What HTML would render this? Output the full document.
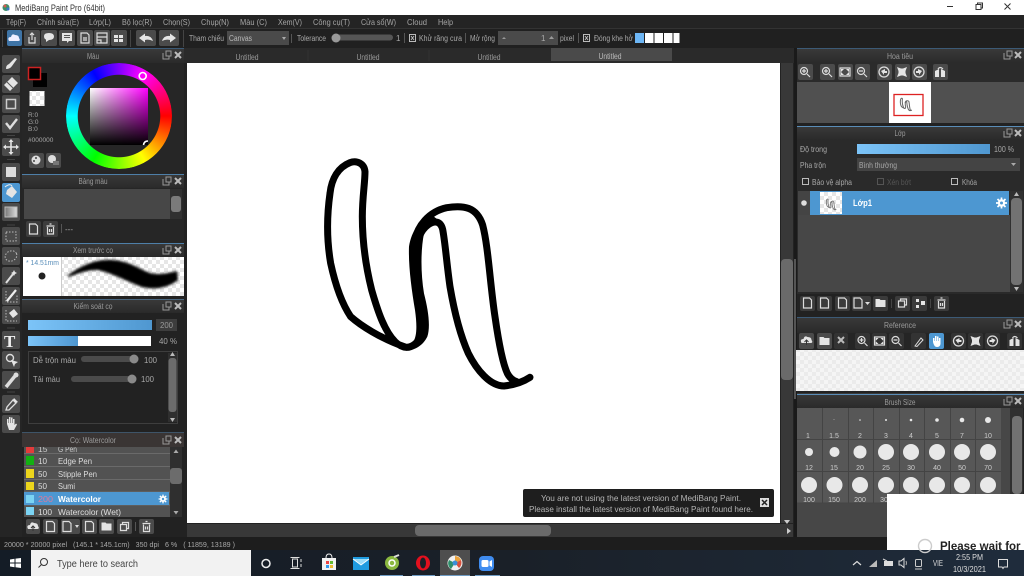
<!DOCTYPE html>
<html><head><meta charset="utf-8"><style>
html,body{margin:0;padding:0;background:#1e1e1e;width:1024px;height:576px;overflow:hidden}
#page{position:absolute;left:0;top:0;width:1024px;height:576px;overflow:hidden;filter:blur(.35px)}
svg{display:block;position:absolute;left:0;top:0}
text{font-family:"Liberation Sans","Noto Sans CJK SC",sans-serif;font-size:8px;fill:#a8a8a8;white-space:pre}
.h{fill:#9a9a9a;text-anchor:middle}
.m{font-size:8.5px;fill:#a5a5a5}
.b{fill:#4b4b4b}
.i{fill:none;stroke:#ddd;stroke-width:1.2}
.f{fill:#e4e4e4}
#wheel{position:absolute;left:66px;top:63px;width:106px;height:106px;border-radius:50%;background:conic-gradient(from 90deg,#f00,#ff0,#0f0,#0ff,#00f,#f0f,#f00);-webkit-mask:radial-gradient(circle,transparent 41px,#000 41.5px);mask:radial-gradient(circle,transparent 41px,#000 41.5px)}
#sq{position:absolute;left:90px;top:88px;width:58px;height:57px;background:linear-gradient(to bottom,transparent,#000),linear-gradient(to right,#fff,#f0f)}
</style></head><body><div id="page">
<svg width="1024" height="576" viewBox="0 0 1024 576" xmlns="http://www.w3.org/2000/svg">
<defs>
<pattern id="ck" width="8" height="8" patternUnits="userSpaceOnUse"><rect width="8" height="8" fill="#fff"/><rect width="4" height="4" fill="#e6e6e6"/><rect x="4" y="4" width="4" height="4" fill="#e6e6e6"/></pattern>
<filter id="bl" x="-10%" y="-30%" width="120%" height="160%"><feGaussianBlur stdDeviation="1.2"/></filter>
<linearGradient id="blue" x1="0" x2="1" y1="0" y2="0"><stop offset="0" stop-color="#7cc4f8"/><stop offset="1" stop-color="#4f97d0"/></linearGradient>
<linearGradient id="head" x1="0" x2="0" y1="0" y2="1"><stop offset="0" stop-color="#3a3a3a"/><stop offset="1" stop-color="#2a2a2a"/></linearGradient>
<g id="doc"><path class="i" d="M-4-5H2L4-3V5H-4Z"/></g>
<g id="pop"><path d="M-4-2V4H2V1M-1-4H4V1H-1Z" fill="none" stroke="#999"/></g>
<g id="x"><path d="M-3-3L3 3M3-3L-3 3" stroke="#bbb" stroke-width="2"/></g>
<g id="fold"><path class="f" d="M-5-4H-1L0-3H5V4H-5Z"/></g>
<g id="copy"><path class="i" d="M-4-2H2V4H-4ZM-2-2V-4H4V2H2"/></g>
<g id="trash"><path class="i" d="M-3-2V5H3V-2M-4-3H4M-1-5H1M-1 0V3M1 0V3"/></g>
<g id="zin"><circle cx="-1" cy="-1" r="3.5" class="i"/><path class="i" d="M2 2L5 5M-3-1H1M-1-3V1"/></g>
<g id="zout"><circle cx="-1" cy="-1" r="3.5" class="i"/><path class="i" d="M2 2L5 5M-3-1H1"/></g>
<g id="fit"><path class="i" d="M-5-4H5V4H-5Z"/><path class="f" d="M-4-3H-1L-4 0ZM4-3V0L1-3ZM-4 3V0L-1 3ZM4 3H1L4 0Z"/></g>
<g id="actual"><path class="f" d="M-5-5L-1-3.5H1L5-5L3.5-1V1L5 5L1 3.5H-1L-5 5L-3.500 1V-1Z"/></g>
<g id="rl"><circle r="5" fill="none" stroke="#ddd" stroke-width="1.3"/><path class="f" d="M-3-1L1-3V-1H3V1H0V3Z"/></g>
<g id="rr"><circle r="5" fill="none" stroke="#ddd" stroke-width="1.3"/><path class="f" d="M3-1L-1-3V-1H-3V1H0V3Z"/></g>
<g id="flip"><path class="f" d="M-5 5V-1L-1-3V5ZM1 5V-3L5-1V5H1Z"/><path class="i" d="M-2-3Q0-6 3-3"/></g>
<g id="gear"><circle r="3.7" fill="#fff"/><path d="M0-5.500V5.500M-5.500 0H5.500M-4-4L4 4M4-4L-4 4" stroke="#fff" stroke-width="1.700"/><circle r="1.500" fill="#4d97d1"/></g>
<g id="cloud"><path class="f" d="M-5 3Q-7-1-3-1Q-2-5 1-3Q5-3 5 0Q7 3 4 3Z"/><path d="M0 5V0M-2 2L0 0L2 2" stroke="#333" fill="none"/></g>
<g id="ink" fill="none" stroke-linecap="round" stroke-linejoin="round">
<path d="M690 712C672 724 650 734 612 738C570 738 530 690 505 640C478 580 462 510 450 440C440 370 436 310 428 268C422 244 405 240 385 254C360 272 352 300 348 340C344 400 355 460 368 510C376 560 372 590 345 612C325 628 305 624 285 605C255 575 235 520 215 450C195 370 187 300 187 230C187 170 195 130 195 95C193 70 170 60 150 68C115 82 95 115 90 160C80 230 80 300 92 370C105 430 125 490 152 530C180 555 240 595 318 622"/>
<path d="M345 300C352 260 385 215 440 203C490 195 530 200 548 255C565 320 570 430 585 530C595 600 608 670 622 700C630 715 640 722 650 725"/>
</g>
</defs>

<!-- base -->
<rect width="1024" height="576" fill="#222"/>
<rect width="1024" height="15" fill="#fff"/>
<circle cx="6" cy="7.500" r="3.500" fill="#3d8f6b"/><circle cx="5" cy="6" r="1.500" fill="#d85a50"/><circle cx="8" cy="9" r="1.500" fill="#3a77c9"/>
<text x="15" y="11" textLength="90" lengthAdjust="spacingAndGlyphs" style="font-size:9px;fill:#333">MediBang Paint Pro (64bit)</text>
<path d="M947 6.500H953" stroke="#333"/><path d="M976 4.500H981V9.500H976ZM977.500 4.500V3H982.500V8H981" fill="none" stroke="#333"/><path d="M1004.500 3.500L1010.500 9.500M1010.500 3.500L1004.500 9.500" stroke="#333"/>

<!-- menu -->
<rect y="15" width="1024" height="14" fill="#242424"/>
<g>
<text class="m" x="6" y="25" textLength="20" lengthAdjust="spacingAndGlyphs">Tệp(F)</text><text class="m" x="37" y="25" textLength="42" lengthAdjust="spacingAndGlyphs">Chỉnh sửa(E)</text><text class="m" x="89" y="25" textLength="22" lengthAdjust="spacingAndGlyphs">Lớp(L)</text><text class="m" x="122" y="25" textLength="30" lengthAdjust="spacingAndGlyphs">Bộ lọc(R)</text><text class="m" x="163" y="25" textLength="27" lengthAdjust="spacingAndGlyphs">Chọn(S)</text><text class="m" x="201" y="25" textLength="28" lengthAdjust="spacingAndGlyphs">Chụp(N)</text><text class="m" x="240" y="25" textLength="27" lengthAdjust="spacingAndGlyphs">Màu (C)</text><text class="m" x="278" y="25" textLength="24" lengthAdjust="spacingAndGlyphs">Xem(V)</text><text class="m" x="313" y="25" textLength="37" lengthAdjust="spacingAndGlyphs">Công cụ(T)</text><text class="m" x="361" y="25" textLength="35" lengthAdjust="spacingAndGlyphs">Cửa sổ(W)</text><text class="m" x="407" y="25" textLength="20" lengthAdjust="spacingAndGlyphs">Cloud</text><text class="m" x="438" y="25" textLength="15" lengthAdjust="spacingAndGlyphs">Help</text>
</g>

<!-- toolbar -->
<rect y="29" width="1024" height="19" fill="#202020"/><path d="M0 28.500H1024" stroke="#333"/>
<path d="M2.500 30V47M130.500 30V47M183.500 30V47" stroke="#444"/>
<rect x="7" y="30" width="15" height="16" rx="2" fill="#3f74a6"/><path d="M9 41Q7 37 11 37Q12 33 15 35Q19 35 19 38Q21 41 18 41Z" fill="#eef"/>
<g fill="#4b4b4b"><rect x="24" y="30" width="16" height="16" rx="2"/><rect x="41" y="30" width="16" height="16" rx="2"/><rect x="59" y="30" width="16" height="16" rx="2"/><rect x="77" y="30" width="16" height="16" rx="2"/><rect x="94" y="30" width="16" height="16" rx="2"/><rect x="111" y="30" width="16" height="16" rx="2"/><rect x="136" y="30" width="20" height="16" rx="2"/><rect x="159" y="30" width="20" height="16" rx="2"/></g>
<path class="i" d="M29 37V43H35V37M32 40V33M30 35L32 33L34 35"/>
<path class="f" d="M44 36Q44 33 49 33Q54 33 54 36.500Q54 40 49 40L46 42V39.500Q44 39 44 36Z"/>
<path class="f" d="M62 33H72V41H69L67 43V41H62Z"/><path d="M64 35.500H70M64 37.500H70" stroke="#555"/>
<path class="i" d="M81 33H87L89 35V43H81ZM83 38H87M83 40H87"/>
<path class="i" d="M97 33H107V43H97ZM97 37H107M97 40H101V43"/>
<path class="f" d="M114 35H118V38H114ZM119 35H123V38H119ZM114 39H118V42H114ZM119 39H123V42H119Z"/>
<path class="f" d="M139 38L145 33.500V36Q151 35 153 41Q149 39 145 40V42.500Z"/><path class="f" d="M176 38L170 33.500V36Q164 35 162 41Q166 39 170 40V42.500Z"/>
<text x="189" y="41" textLength="35" lengthAdjust="spacingAndGlyphs" style="fill:#aaa">Tham chiếu</text>
<rect x="227" y="31" width="62" height="14" fill="#4a4a4a"/><text x="229" y="41" textLength="23" lengthAdjust="spacingAndGlyphs" style="fill:#bbb">Canvas</text><path d="M282 37H286L284 40Z" fill="#aaa"/>
<path d="M291.500 34V43" stroke="#555"/>
<text x="297" y="41" textLength="29" lengthAdjust="spacingAndGlyphs" style="fill:#aaa">Tolerance</text>
<rect x="333" y="34.500" width="60" height="6" rx="3" fill="#555"/><circle cx="336" cy="38" r="4.500" fill="#999"/>
<text x="396" y="41">1</text><path d="M404.500 33V43M465.500 33V43M578.500 33V43" stroke="#555"/>
<rect x="409.500" y="34.500" width="6" height="7" fill="none" stroke="#bbb"/><path d="M411 36L414 40M414 36L411 40" stroke="#bbb"/>
<text x="419" y="41" textLength="43" lengthAdjust="spacingAndGlyphs">Khử răng cưa</text><text x="470" y="41" textLength="25" lengthAdjust="spacingAndGlyphs">Mở rộng</text>
<rect x="498" y="31" width="60" height="14" fill="#4a4a4a"/><path d="M502 39H506L504 37Z" fill="#999"/><text x="541" y="41" style="fill:#aaa">1</text><path d="M549 39H554L551.500 36Z" fill="#999"/>
<text x="560" y="41" textLength="14" lengthAdjust="spacingAndGlyphs">pixel</text>
<rect x="583.500" y="34.500" width="6" height="7" fill="none" stroke="#bbb"/><path d="M585 36L588 40M588 36L585 40" stroke="#bbb"/>
<text x="594" y="41" textLength="39" lengthAdjust="spacingAndGlyphs">Đóng khe hở</text>
<rect x="635" y="33" width="9" height="10" fill="#6db6f5"/><rect x="645" y="33" width="8.500" height="10" fill="#fff"/><rect x="654.500" y="33" width="8.500" height="10" fill="#fff"/><rect x="664" y="33" width="8.500" height="10" fill="#fff"/><rect x="673.500" y="33" width="6" height="10" fill="#fff"/>

<!-- tabs -->
<rect x="184" y="48" width="612" height="15" fill="#2a2a2a"/>
<rect x="551" y="48" width="121" height="13" fill="#4a4a4a"/>
<path d="M308 50V61M429 50V61" stroke="#333"/>
<text class="h" x="247" y="60" textLength="23" lengthAdjust="spacingAndGlyphs">Untitled</text><text class="h" x="368" y="60" textLength="23" lengthAdjust="spacingAndGlyphs">Untitled</text><text class="h" x="489" y="60" textLength="23" lengthAdjust="spacingAndGlyphs">Untitled</text><text class="h" x="610" y="59" textLength="23" lengthAdjust="spacingAndGlyphs" style="fill:#bbb">Untitled</text>

<!-- canvas -->
<rect x="187" y="63" width="593" height="460" fill="#fff"/>
<g transform="translate(300 140) scale(.3333)">
<use href="#ink" stroke="#000" stroke-width="21"/>
<path d="M327 320C325 380 335 450 345 510C352 560 350 590 340 605L318 632C345 632 370 615 382 590C392 560 385 510 372 460C362 400 362 330 372 280C380 262 395 250 415 240L395 225C360 240 335 270 327 320Z" fill="#000"/>
</g>

<!-- scrollbars -->
<rect x="781" y="63" width="12" height="460" fill="#383838"/><rect x="781" y="259" width="12" height="121" rx="4" fill="#6a6a6a"/>
<path d="M784 520H790L787 524Z" fill="#ccc"/>
<rect x="187" y="524" width="606" height="13" fill="#383838"/><rect x="415" y="525" width="136" height="11" rx="4" fill="#6a6a6a"/>
<path d="M787 528V534L791 531Z" fill="#ccc"/>
<rect x="794" y="48" width="3" height="489" fill="#1a1a1a"/><rect x="794" y="259" width="2" height="140" fill="#555"/>

<!-- notice -->
<rect x="523" y="489" width="251" height="28" rx="2" fill="#1e1e1e"/>
<text class="h" x="641" y="501" textLength="200" lengthAdjust="spacingAndGlyphs" style="font-size:8.300px;fill:#b5b5b5">You are not using the latest version of MediBang Paint.</text>
<text class="h" x="641" y="512" textLength="224" lengthAdjust="spacingAndGlyphs" style="font-size:8.300px;fill:#b5b5b5">Please install the latest version of MediBang Paint found here.</text>
<rect x="760" y="498" width="9" height="9" fill="#ddd"/><path d="M762 500L767 505M767 500L762 505" stroke="#222" stroke-width="1.500"/>

<!-- left tools -->
<rect width="22" height="489" y="48" fill="#252525"/>
<g fill="#4b4b4b">
<rect x="2" y="55" width="18" height="18" rx="2"/><rect x="2" y="75" width="18" height="18" rx="2"/><rect x="2" y="95" width="18" height="18" rx="2"/><rect x="2" y="115" width="18" height="18" rx="2"/><rect x="2" y="138" width="18" height="18" rx="2"/><rect x="2" y="163" width="18" height="18" rx="2"/><rect x="2" y="203" width="18" height="18" rx="2"/><rect x="2" y="227" width="18" height="18" rx="2"/><rect x="2" y="247" width="18" height="18" rx="2"/><rect x="2" y="267" width="18" height="18" rx="2"/><rect x="2" y="287" width="18" height="18" rx="2"/><rect x="2" y="306" width="18" height="18" rx="2"/><rect x="2" y="331" width="18" height="18" rx="2"/><rect x="2" y="351" width="18" height="18" rx="2"/><rect x="2" y="371" width="18" height="18" rx="2"/><rect x="2" y="395" width="18" height="18" rx="2"/><rect x="2" y="415" width="18" height="18" rx="2"/>
</g>
<rect x="2" y="183" width="18" height="19" rx="2" fill="#4d97d1"/>
<path class="f" d="M6 69Q6 65 9 64L15 58L17 59L12 66Q10 69 6 69Z"/>
<path class="f" d="M12 77L18 83L10 91L4 85Z"/><path d="M7 82L13 88" stroke="#555"/>
<rect x="6.500" y="99.500" width="9" height="9" fill="none" stroke="#ccc" stroke-width="1.500"/>
<path d="M6 123L10 128L17 119" fill="none" stroke="#ddd" stroke-width="2.400"/>
<path d="M11 140V154M4 147H18" stroke="#e4e4e4" stroke-width="1.600"/><path class="f" d="M11 139L13.500 142H8.500ZM11 155L13.500 152H8.500ZM3 147L6 144.500V149.500ZM19 147L16 144.500V149.500Z"/>
<rect x="6" y="167" width="10" height="10" fill="#ddd"/>
<path class="f" d="M7 190L12 186L17 192L12 198L6 194Z"/><path d="M5 187Q10 183 12 186" stroke="#eee" fill="none"/>
<defs><linearGradient id="gr" x1="0" x2="1"><stop offset="0" stop-color="#777"/><stop offset="1" stop-color="#ddd"/></linearGradient></defs>
<rect x="5" y="207" width="12" height="10" fill="url(#gr)" stroke="#bbb"/>
<rect x="6" y="232" width="10" height="9" fill="none" stroke="#bbb" stroke-dasharray="1.500 1.500"/>
<ellipse cx="11" cy="256" rx="6" ry="5" fill="none" stroke="#bbb" stroke-dasharray="1.500 1.500" transform="rotate(-25 11 256)"/>
<path d="M6 283L13 274" stroke="#ddd" stroke-width="2"/><path class="f" d="M14 270L15 272L17 273L15 274L14 276L13 274L11 273L13 272Z"/>
<path d="M6 291V302H17V295" fill="none" stroke="#bbb" stroke-dasharray="1.500 1.500"/><path d="M7 301L16 290" stroke="#eee" stroke-width="2.200"/>
<path d="M6 310V321H17" fill="none" stroke="#bbb" stroke-dasharray="1.500 1.500"/><path class="f" d="M9 313L14 309L18 314L13 318Z"/>
<text x="4" y="347" style="font-family:'Liberation Serif',serif;font-size:17px;font-weight:bold;fill:#eee">T</text>
<circle cx="10" cy="358" r="3.500" fill="none" stroke="#ddd" stroke-width="1.400"/><path class="f" d="M11 360L18 362L15 364L14 367Z"/>
<path d="M6 387L15 376" stroke="#ddd" stroke-width="3.500"/><circle cx="16" cy="375" r="2.500" fill="#ddd"/>
<path d="M6 410L7 407L13 400L16 403L9 410Z" fill="none" stroke="#ddd" stroke-width="1.300"/><path class="f" d="M14 398L18 402L16 403L13 400Z"/>
<path class="f" d="M7 424V419H8.500V423H9V417H10.500V423H11V417.500H12.500V423H13V419H14.500V425L16 423.500L17 424.500L14 430H9Z"/>
<path d="M7 135.500H15M7 159.500H15M7 225H15M7 328H15M7 392H15" stroke="#444"/>

<!-- Màu panel -->
<rect x="22" y="48" width="162" height="126" fill="#262626"/>
<rect x="22" y="48" width="162" height="15" fill="url(#head)"/><path d="M22 48.500H184" stroke="#3c5a76"/>
<text class="h" x="93" y="59" textLength="12" lengthAdjust="spacingAndGlyphs">Màu</text>
<use href="#pop" x="167" y="55"/><use href="#x" x="178" y="55"/>
<rect x="33" y="73" width="14" height="14" fill="#000"/><rect x="28.500" y="67.500" width="12" height="12" fill="#000" stroke="#c22" stroke-width="1.500"/>
<rect x="29.500" y="91" width="15" height="15" fill="url(#ck)"/>
<text x="28" y="117" style="font-size:6.500px">R:0</text><text x="28" y="124" style="font-size:6.500px">G:0</text><text x="28" y="131" style="font-size:6.500px">B:0</text><text x="28" y="142" style="font-size:6.500px">#000000</text>
<rect x="29" y="153" width="15" height="15" rx="2" fill="#4b4b4b"/><rect x="46" y="153" width="15" height="15" rx="2" fill="#4b4b4b"/>
<circle cx="36" cy="160" r="4.500" fill="#ddd"/><circle cx="36" cy="158" r="1" fill="#444"/><circle cx="34" cy="161" r="1" fill="#444"/>
<circle cx="52" cy="159" r="4" fill="#ddd"/><rect x="53" y="161" width="6" height="4" fill="#777"/>

<!-- Bảng màu -->
<rect x="22" y="173" width="162" height="70" fill="#262626"/>
<rect x="22" y="174" width="162" height="14" fill="url(#head)"/><path d="M22 174.500H184" stroke="#4e7fa8"/>
<text class="h" x="93" y="184" textLength="29" lengthAdjust="spacingAndGlyphs">Bảng màu</text><use href="#pop" x="167" y="181"/><use href="#x" x="178" y="181"/>
<rect x="24" y="189" width="146" height="30" fill="#474747"/>
<rect x="170" y="189" width="12" height="30" fill="#303030"/><rect x="171" y="196" width="10" height="16" rx="3" fill="#7a7a7a"/>
<rect x="26" y="221" width="15" height="16" rx="2" fill="#3d3d3d"/><rect x="43" y="221" width="15" height="16" rx="2" fill="#3d3d3d"/>
<use href="#doc" x="33.500" y="229"/><use href="#trash" x="50.500" y="229"/>
<path d="M61.500 224V233" stroke="#555"/><text x="65" y="232">---</text>

<!-- Xem trước cọ -->
<rect x="22" y="243" width="162" height="14" fill="url(#head)"/><path d="M22 243.500H184" stroke="#4e7fa8"/>
<text class="h" x="93" y="253" textLength="40" lengthAdjust="spacingAndGlyphs">Xem trước cọ</text><use href="#pop" x="167" y="250"/><use href="#x" x="178" y="250"/>
<rect x="23" y="257" width="161" height="39" fill="url(#ck)"/><rect x="23" y="257" width="38" height="39" fill="#fff"/><path d="M61.500 257V296" stroke="#ccc"/>
<text x="26" y="265" textLength="33" lengthAdjust="spacingAndGlyphs" style="font-size:7px;fill:#5b8fba">* 14.51mm</text>
<circle cx="42" cy="276" r="3.500" fill="#222"/>
<path d="M68 275C78 268 90 261 105 260C118 259 128 262 145 271C155 276 165 274 177 271L178 280C168 288 155 290 142 287C128 282 112 273 98 270C85 270 78 274 68 277Z" fill="#000" filter="url(#bl)"/>

<!-- Kiểm soát cọ -->
<rect x="22" y="299" width="162" height="14" fill="url(#head)"/><path d="M22 299.500H184" stroke="#4a6780"/>
<text class="h" x="93" y="309" textLength="39" lengthAdjust="spacingAndGlyphs">Kiểm soát cọ</text><use href="#pop" x="167" y="306"/><use href="#x" x="178" y="306"/>
<rect x="28" y="320" width="124" height="10" fill="url(#blue)"/>
<rect x="156" y="319" width="21" height="12" fill="#3d3d3d"/><text class="h" x="166.500" y="328" textLength="13" lengthAdjust="spacingAndGlyphs" style="font-size:8.500px">200</text>
<rect x="28" y="336" width="123" height="10" fill="#fff"/><rect x="28" y="336" width="50" height="10" fill="url(#blue)"/>
<text x="159" y="344" textLength="18" lengthAdjust="spacingAndGlyphs" style="font-size:8.500px">40 %</text>
<rect x="28.500" y="351.500" width="149" height="72" fill="none" stroke="#3e3e3e"/>
<text x="33" y="363" textLength="43" lengthAdjust="spacingAndGlyphs" style="font-size:8.500px">Dễ trộn màu</text>
<rect x="81" y="356" width="55" height="6" rx="3" fill="#4b4b4b"/><circle cx="134" cy="359" r="4.500" fill="#8a8a8a"/>
<text x="144" y="363" textLength="13" lengthAdjust="spacingAndGlyphs" style="font-size:8.500px">100</text>
<text x="33" y="382" textLength="27" lengthAdjust="spacingAndGlyphs" style="font-size:8.500px">Tải màu</text>
<rect x="71" y="376" width="60" height="6" rx="3" fill="#4b4b4b"/><circle cx="132" cy="379" r="4.500" fill="#8a8a8a"/>
<text x="141" y="382" textLength="13" lengthAdjust="spacingAndGlyphs" style="font-size:8.500px">100</text>
<rect x="168" y="353" width="9" height="69" fill="#2f2f2f"/><rect x="168.500" y="358" width="8" height="54" rx="3" fill="#6c6c6c"/>
<path d="M170 418H175L172.500 422Z" fill="#bbb"/><path d="M170 356H175L172.500 352Z" fill="#bbb"/>

<!-- Cọ panel -->
<rect x="24" y="447" width="146" height="70" fill="#525252"/>
<path d="M24 453.500H170M24 466.500H170M24 479.500H170M24 492H170M24 505H170" stroke="#6a6a6a"/>
<rect x="26" y="447" width="8" height="6" fill="#e43b3b"/><text x="38" y="452" style="font-size:8.500px;fill:#ccc">15</text><text x="58" y="452" textLength="19" lengthAdjust="spacingAndGlyphs" style="font-size:8.500px;fill:#ccc">G Pen</text>
<rect x="26" y="456" width="8" height="9" fill="#12b012"/><text x="38" y="464" textLength="9" lengthAdjust="spacingAndGlyphs" style="font-size:8.500px;fill:#ddd">10</text><text x="58" y="464" textLength="34" lengthAdjust="spacingAndGlyphs" style="font-size:8.500px;fill:#ddd">Edge Pen</text>
<rect x="26" y="469" width="8" height="9" fill="#ecd51c"/><text x="38" y="477" textLength="9" lengthAdjust="spacingAndGlyphs" style="font-size:8.500px;fill:#ddd">50</text><text x="58" y="477" textLength="39" lengthAdjust="spacingAndGlyphs" style="font-size:8.500px;fill:#ddd">Stipple Pen</text>
<rect x="26" y="482" width="8" height="8" fill="#ecd51c"/><text x="38" y="489" textLength="9" lengthAdjust="spacingAndGlyphs" style="font-size:8.500px;fill:#ddd">50</text><text x="58" y="489" textLength="17" lengthAdjust="spacingAndGlyphs" style="font-size:8.500px;fill:#ddd">Sumi</text>
<rect x="24" y="492" width="145" height="13" fill="#4d97d1"/>
<rect x="26" y="495" width="8" height="8" fill="#7bd4f4"/><text x="38" y="502" textLength="15" lengthAdjust="spacingAndGlyphs" style="font-size:8.500px;fill:#e07a9a">200</text><text x="58" y="502" textLength="43" lengthAdjust="spacingAndGlyphs" style="font-size:8.500px;font-weight:bold;fill:#fff">Watercolor</text><use href="#gear" transform="translate(163 499) scale(.8)"/>
<rect x="26" y="507" width="8" height="8" fill="#7bd4f4"/><text x="38" y="515" textLength="14" lengthAdjust="spacingAndGlyphs" style="font-size:8.500px;fill:#ddd">100</text><text x="58" y="515" textLength="63" lengthAdjust="spacingAndGlyphs" style="font-size:8.500px;fill:#ddd">Watercolor (Wet)</text>
<rect x="22" y="432" width="162" height="15" fill="#3a3534"/><path d="M22 432.500H184" stroke="#3e5468"/>
<text class="h" x="93" y="443" textLength="46" lengthAdjust="spacingAndGlyphs">Cọ: Watercolor</text><use href="#pop" x="167" y="440"/><use href="#x" x="178" y="440"/>
<rect x="170" y="447" width="12" height="70" fill="#2f2f2f"/><rect x="170" y="468" width="12" height="16" rx="3" fill="#6c6c6c"/>
<path d="M173.500 453H178.500L176 449.500ZM173.500 511H178.500L176 514.500Z" fill="#aaa"/>
<g fill="#4b4b4b"><rect x="26" y="519" width="14" height="15" rx="2"/><rect x="43" y="519" width="15" height="15" rx="2"/><rect x="61" y="519" width="19" height="15" rx="2"/><rect x="82" y="519" width="15" height="15" rx="2"/><rect x="99" y="519" width="15" height="15" rx="2"/><rect x="117" y="519" width="15" height="15" rx="2"/><rect x="139" y="519" width="15" height="15" rx="2"/></g>
<use href="#cloud" x="33" y="526"/><use href="#doc" x="50.500" y="526.500"/><use href="#doc" x="67" y="526.500"/><path d="M75 525H79L77 528Z" fill="#ddd"/><use href="#doc" x="89.500" y="526.500"/><use href="#fold" x="106.500" y="526.500"/><use href="#copy" x="124.500" y="526.500"/><path d="M135.500 522V531" stroke="#555"/><use href="#trash" x="146.500" y="526.500"/>

<!-- Right: Hoa tiêu -->
<rect x="797" y="48" width="227" height="15" fill="url(#head)"/><path d="M797 48.500H1024" stroke="#3c5a76"/>
<text class="h" x="900" y="59" textLength="26" lengthAdjust="spacingAndGlyphs">Hoa tiêu</text><use href="#pop" x="1008" y="55"/><use href="#x" x="1018" y="55"/>
<rect x="797" y="63" width="227" height="19" fill="#2b2b2b"/>
<g fill="#4b4b4b"><rect x="798" y="64" width="15" height="16" rx="2"/><rect x="820" y="64" width="15" height="16" rx="2"/><rect x="838" y="64" width="15" height="16" rx="2"/><rect x="855" y="64" width="15" height="16" rx="2"/><rect x="877" y="64" width="15" height="16" rx="2"/><rect x="895" y="64" width="15" height="16" rx="2"/><rect x="912" y="64" width="15" height="16" rx="2"/><rect x="933" y="64" width="15" height="16" rx="2"/></g>
<use href="#zin" x="805" y="72"/><use href="#zin" x="827" y="72"/><use href="#fit" x="845" y="72"/><use href="#zout" x="862" y="72"/><use href="#rl" x="884" y="72"/><use href="#actual" x="902" y="72"/><use href="#rr" x="919" y="72"/><use href="#flip" x="940" y="72"/>
<rect x="797" y="82" width="227" height="41" fill="#505050"/>
<rect x="889" y="82" width="42" height="41" fill="#fff"/>
<rect x="894" y="94.500" width="29" height="21" fill="none" stroke="#d22" stroke-width="1.300"/>
<g transform="translate(898.800 97) scale(.0185)"><use href="#ink" stroke="#666" stroke-width="55"/></g>

<!-- Lớp -->
<rect x="797" y="124" width="227" height="2" fill="#222"/>
<rect x="797" y="126" width="227" height="168" fill="#2a2a2a"/>
<rect x="797" y="126" width="227" height="14" fill="url(#head)"/><path d="M797 126.500H1024" stroke="#5a8db8"/>
<text class="h" x="900" y="136" textLength="11" lengthAdjust="spacingAndGlyphs">Lớp</text><use href="#pop" x="1008" y="133"/><use href="#x" x="1018" y="133"/>
<text x="800" y="152" textLength="27" lengthAdjust="spacingAndGlyphs" style="font-size:8.500px">Độ trong</text>
<rect x="857" y="144" width="133" height="10" fill="url(#blue)"/><text x="994" y="152" textLength="20" lengthAdjust="spacingAndGlyphs" style="font-size:8.500px">100 %</text>
<text x="800" y="168" textLength="26" lengthAdjust="spacingAndGlyphs" style="font-size:8.500px">Pha trộn</text>
<rect x="857" y="158" width="163" height="13" fill="#444"/><text x="859" y="168" textLength="38" lengthAdjust="spacingAndGlyphs" style="font-size:8.500px">Bình thường</text><path d="M1011 163H1016L1013.500 166Z" fill="#aaa"/>
<rect x="802.500" y="178.500" width="6" height="6" fill="none" stroke="#bbb"/><text x="812" y="185" textLength="40" lengthAdjust="spacingAndGlyphs" style="font-size:8.500px">Bảo vệ alpha</text>
<rect x="877.500" y="178.500" width="6" height="6" fill="none" stroke="#555"/><text x="887" y="185" textLength="24" lengthAdjust="spacingAndGlyphs" style="font-size:8.500px;fill:#555">Xén bớt</text>
<rect x="951.500" y="178.500" width="6" height="6" fill="none" stroke="#bbb"/><text x="962" y="185" textLength="15" lengthAdjust="spacingAndGlyphs" style="font-size:8.500px">Khóa</text>
<rect x="798" y="191" width="12" height="24" fill="#444"/><circle cx="804" cy="203" r="2.800" fill="#ddd"/>
<rect x="810" y="191" width="199" height="24" fill="#4d97d1"/>
<rect x="820" y="192" width="22" height="22" fill="url(#ck)"/>
<g transform="translate(825 198) scale(.016)"><use href="#ink" stroke="#777" stroke-width="55"/></g>
<text x="853" y="206" textLength="19" lengthAdjust="spacingAndGlyphs" style="font-size:9px;font-weight:bold;fill:#fff">Lớp1</text>
<use href="#gear" x="1001.500" y="203"/>
<rect x="798" y="215" width="212" height="77" fill="#474747"/>
<rect x="1010" y="191" width="13" height="101" fill="#303030"/><rect x="1011" y="198" width="11" height="87" rx="4" fill="#727272"/>
<path d="M1014 196H1019L1016.500 192ZM1014 287H1019L1016.500 291Z" fill="#bbb"/>
<g fill="#3b3b3b"><rect x="800" y="296" width="15" height="15" rx="2"/><rect x="817" y="296" width="15" height="15" rx="2"/><rect x="835" y="296" width="15" height="15" rx="2"/><rect x="852" y="296" width="19" height="15" rx="2"/><rect x="873" y="296" width="15" height="15" rx="2"/><rect x="895" y="296" width="15" height="15" rx="2"/><rect x="912" y="296" width="15" height="15" rx="2"/><rect x="934" y="296" width="15" height="15" rx="2"/></g>
<use href="#doc" x="807.500" y="303"/><use href="#doc" x="824.500" y="303"/><use href="#doc" x="842.500" y="303"/><use href="#doc" x="858" y="303"/><path d="M865 302H870L867.500 305Z" fill="#ddd"/><use href="#fold" x="880.500" y="303"/><use href="#copy" x="902.500" y="303"/>
<path class="f" d="M916 299H919V302H916ZM921 301H925V305H921ZM916 305H919V308H916Z"/><use href="#trash" x="941.500" y="303"/>
<path d="M891.500 299V308M930.500 299V308" stroke="#444"/>

<!-- Reference -->
<rect x="797" y="317" width="227" height="16" fill="url(#head)"/><path d="M797 317.500H1024" stroke="#3c5a76"/>
<text class="h" x="900" y="328" textLength="32" lengthAdjust="spacingAndGlyphs">Reference</text><use href="#pop" x="1008" y="324"/><use href="#x" x="1018" y="324"/>
<rect x="797" y="333" width="227" height="17" fill="#252525"/>
<g fill="#4b4b4b"><rect x="799" y="333" width="15" height="16" rx="2"/><rect x="817" y="333" width="15" height="16" rx="2"/></g>
<g fill="#333"><rect x="834" y="333" width="14" height="16" rx="2"/><rect x="855" y="333" width="15" height="16" rx="2"/><rect x="872" y="333" width="15" height="16" rx="2"/><rect x="889" y="333" width="15" height="16" rx="2"/><rect x="911" y="333" width="15" height="16" rx="2"/><rect x="951" y="333" width="15" height="16" rx="2"/><rect x="968" y="333" width="15" height="16" rx="2"/><rect x="985" y="333" width="15" height="16" rx="2"/><rect x="1007" y="333" width="15" height="16" rx="2"/></g>
<rect x="929" y="333" width="15" height="16" rx="2" fill="#4d97d1"/>
<use href="#cloud" x="806.500" y="340"/><use href="#fold" x="824.500" y="341"/><use href="#x" x="841" y="340"/><use href="#zin" x="862.500" y="341"/><use href="#fit" x="879.500" y="341"/><use href="#zout" x="896.500" y="341"/>
<path d="M915 346L921 338L923 340L917 346.500Z" fill="none" stroke="#ddd"/>
<path d="M933 342V338H934.500V341H935V336H936.500V341H937V336.500H938.500V341H939V338H940.500V344Q940 347 937 347Q934 347 933 342Z" fill="#fff"/>
<use href="#rl" x="958.500" y="341"/><use href="#actual" x="975.500" y="341"/><use href="#rr" x="992.500" y="341"/><use href="#flip" x="1014.500" y="341"/>
<rect x="796" y="350" width="228" height="41" fill="url(#ck)"/>
<rect x="796" y="350" width="228" height="41" fill="#eee" opacity=".6"/>

<!-- Brush size -->
<rect x="797" y="393" width="227" height="15" fill="url(#head)"/><path d="M797 394.500H1024" stroke="#5a8db8"/>
<text class="h" x="900" y="405" textLength="31" lengthAdjust="spacingAndGlyphs">Brush Size</text><use href="#pop" x="1008" y="401"/><use href="#x" x="1018" y="401"/>
<rect x="797" y="408" width="213" height="129" fill="#474747"/>
<rect x="797" y="408" width="204" height="95" fill="#575757"/>
<path d="M822.500 408V503M848.500 408V503M873.500 408V503M899.500 408V503M924.500 408V503M950.500 408V503M975.500 408V503M797 439.500H1001M797 471.500H1001M797 503H1001" stroke="#444"/>
<rect x="1010" y="408" width="13" height="129" fill="#303030"/><rect x="1012" y="416" width="10" height="78" rx="4" fill="#727272"/>
<g fill="#e8e8e8">
<circle cx="834" cy="419.500" r=".4"/><circle cx="860" cy="420" r=".8"/><circle cx="886" cy="420" r="1"/><circle cx="911" cy="420" r="1.300"/><circle cx="937" cy="420" r="1.800"/><circle cx="962" cy="420" r="2.300"/><circle cx="988" cy="420" r="3"/>
<circle cx="809" cy="452" r="4"/><circle cx="834.500" cy="452" r="5"/><circle cx="860" cy="452" r="6.500"/><circle cx="886" cy="452" r="8"/><circle cx="911" cy="452" r="8"/><circle cx="937" cy="452" r="8"/><circle cx="962" cy="452" r="8"/><circle cx="988" cy="452" r="8"/>
<circle cx="809" cy="485" r="8"/><circle cx="834.500" cy="485" r="8"/><circle cx="860" cy="485" r="8"/><circle cx="886" cy="485" r="8"/><circle cx="911" cy="485" r="8"/><circle cx="937" cy="485" r="8"/><circle cx="962" cy="485" r="8"/><circle cx="988" cy="485" r="8"/>
</g>
<g>
<text x="808" y="438" style="font-size:7px;fill:#ccc;text-anchor:middle">1</text><text x="834" y="438" style="font-size:7px;fill:#ccc;text-anchor:middle">1.5</text><text x="860" y="438" style="font-size:7px;fill:#ccc;text-anchor:middle">2</text><text x="886" y="438" style="font-size:7px;fill:#ccc;text-anchor:middle">3</text><text x="911" y="438" style="font-size:7px;fill:#ccc;text-anchor:middle">4</text><text x="937" y="438" style="font-size:7px;fill:#ccc;text-anchor:middle">5</text><text x="962" y="438" style="font-size:7px;fill:#ccc;text-anchor:middle">7</text><text x="988" y="438" style="font-size:7px;fill:#ccc;text-anchor:middle">10</text>
<text x="809" y="470" style="font-size:7px;fill:#ccc;text-anchor:middle">12</text><text x="834" y="470" style="font-size:7px;fill:#ccc;text-anchor:middle">15</text><text x="860" y="470" style="font-size:7px;fill:#ccc;text-anchor:middle">20</text><text x="886" y="470" style="font-size:7px;fill:#ccc;text-anchor:middle">25</text><text x="911" y="470" style="font-size:7px;fill:#ccc;text-anchor:middle">30</text><text x="937" y="470" style="font-size:7px;fill:#ccc;text-anchor:middle">40</text><text x="962" y="470" style="font-size:7px;fill:#ccc;text-anchor:middle">50</text><text x="988" y="470" style="font-size:7px;fill:#ccc;text-anchor:middle">70</text>
<text x="809" y="502" style="font-size:7px;fill:#ccc;text-anchor:middle">100</text><text x="834" y="502" style="font-size:7px;fill:#ccc;text-anchor:middle">150</text><text x="860" y="502" style="font-size:7px;fill:#ccc;text-anchor:middle">200</text><text x="886" y="502" style="font-size:7px;fill:#ccc;text-anchor:middle">300</text>
</g>

<!-- status -->
<rect y="537" width="1024" height="13" fill="#1d1d1d"/>
<text x="4" y="547" textLength="231" lengthAdjust="spacingAndGlyphs" style="font-size:7.700px;fill:#a8a8a8">20000 * 20000 pixel   (145.1 * 145.1cm)   350 dpi   6 %   ( 11859, 13189 )</text>

<!-- taskbar -->
<defs><linearGradient id="tb" x1="0" x2="1"><stop offset="0" stop-color="#141c26"/><stop offset=".5" stop-color="#1a2028"/><stop offset="1" stop-color="#1f2c3c"/></linearGradient></defs>
<rect y="550" width="1024" height="26" fill="url(#tb)"/>
<path d="M10 559.500L14.500 558.800V562.500H10ZM15.500 558.600L21 558V562.500H15.500ZM10 563.500H14.500V567.200L10 566.500ZM15.500 563.500H21V568L15.500 567.300Z" style="fill:#fff"/>
<rect x="31" y="550" width="220" height="26" fill="#f2f2f2"/>
<circle cx="44" cy="562" r="3.500" fill="none" stroke="#333"/><path d="M41.500 564.500L38.500 567.500" stroke="#333"/>
<text x="57" y="567" textLength="81" lengthAdjust="spacingAndGlyphs" style="font-size:10px;fill:#444">Type here to search</text>
<circle cx="266" cy="563.500" r="4" fill="none" stroke="#eee" stroke-width="1.500"/>
<path d="M292.500 559H297.500V567H292.500ZM290.500 557.500H299.500M290.500 568.500H299.500M301 559V562M301 564V567" fill="none" stroke="#ddd"/>
<path d="M322 558H336V570H322Z" fill="#f2f2f2"/><path d="M326 558Q326 554 329 554Q332 554 332 558" fill="none" stroke="#eee"/>
<rect x="326" y="561" width="3" height="3" fill="#e44"/><rect x="330" y="561" width="3" height="3" fill="#6b3"/><rect x="326" y="565" width="3" height="3" fill="#39e"/><rect x="330" y="565" width="3" height="3" fill="#eb3"/>
<rect x="353" y="557" width="16" height="13" fill="#1f9be0"/><path d="M353 559L361 565L369 559" fill="#9cdcf8" stroke="#fff" stroke-width=".8"/>
<circle cx="392" cy="563" r="7" fill="#8ab840"/><circle cx="392" cy="563" r="3" fill="none" stroke="#fff" stroke-width="1.500"/><path d="M394 557L399 555" stroke="#ddd" stroke-width="2"/>
<ellipse cx="423" cy="563" rx="7" ry="7.500" fill="#e3101e"/><ellipse cx="423" cy="563" rx="3" ry="5.500" fill="#1a2028"/>
<rect x="440" y="550" width="30" height="26" fill="#4e4e4e"/>
<circle cx="455" cy="563" r="7.500" fill="#f0f0f0"/><path d="M455 563L455 556A7 7 0 0 1 461 560Z" fill="#e9a23c"/><path d="M455 563L461 560A7 7 0 0 1 459 568Z" fill="#d8503c"/><path d="M455 563L451 569A7 7 0 0 1 449 560Z" fill="#2f8f6b"/><circle cx="455" cy="563" r="2.500" fill="#3a8fd8"/>
<rect x="479" y="556" width="15" height="15" rx="4" fill="#3f8cf0"/><rect x="481.500" y="560" width="7" height="7" rx="1.500" fill="#fff"/><path d="M489.500 561.500L492 560V567L489.500 565.500Z" fill="#fff"/>
<path d="M380 575.500H403M412 575.500H435M440 575.500H470M475 575.500H500" stroke="#6f9cc4"/>

<!-- dialog -->
<rect x="887" y="494" width="137" height="56" fill="#fff"/>
<circle cx="925" cy="546" r="6.500" fill="none" stroke="#ccc" stroke-width="1.400"/>
<svg x="887" y="494" width="137" height="56" viewBox="0 0 137 56"><text x="53" y="56" style="font-size:11.500px;font-weight:bold;fill:#222">Please wait for :</text></svg>

<!-- tray -->
<path d="M853 565L857 561.500L861 565" fill="none" stroke="#ddd" stroke-width="1.200"/>
<path d="M869 567L877 560V567Z" fill="#bbb"/>
<rect x="884" y="561" width="9" height="5" fill="#ddd"/><path d="M883 559L887 561" stroke="#ddd"/>
<path d="M899 561H901L904 558.500V567.500L901 565H899Z" fill="none" stroke="#ddd"/><path d="M906 561Q907 563 906 565" fill="none" stroke="#aaa"/>
<rect x="915.500" y="559.500" width="6" height="7" rx="1" fill="none" stroke="#ccc"/><path d="M915 569H922" stroke="#ccc"/>
<text x="938" y="566" textLength="10" lengthAdjust="spacingAndGlyphs" style="font-size:8px;fill:#ddd;text-anchor:middle">VIE</text>
<text x="969.500" y="560" textLength="27" lengthAdjust="spacingAndGlyphs" style="font-size:8px;fill:#ddd;text-anchor:middle">2:55 PM</text>
<text x="969.500" y="572" textLength="33" lengthAdjust="spacingAndGlyphs" style="font-size:8px;fill:#ddd;text-anchor:middle">10/3/2021</text>
<path d="M998.500 559.500H1007.500V567H1004L1003 568.500L1002 567H998.500Z" fill="none" stroke="#ddd"/>
</svg>
<div id="wheel"></div><div id="sq"></div>
<svg width="1024" height="576" viewBox="0 0 1024 576" style="pointer-events:none">
<circle cx="142.700" cy="76" r="3.500" fill="none" stroke="#fff" stroke-width="1.600"/>
<path d="M143.500 145Q144 141 148 141" fill="none" stroke="#fff" stroke-width="1.600"/>
</svg>
</div></body></html>
